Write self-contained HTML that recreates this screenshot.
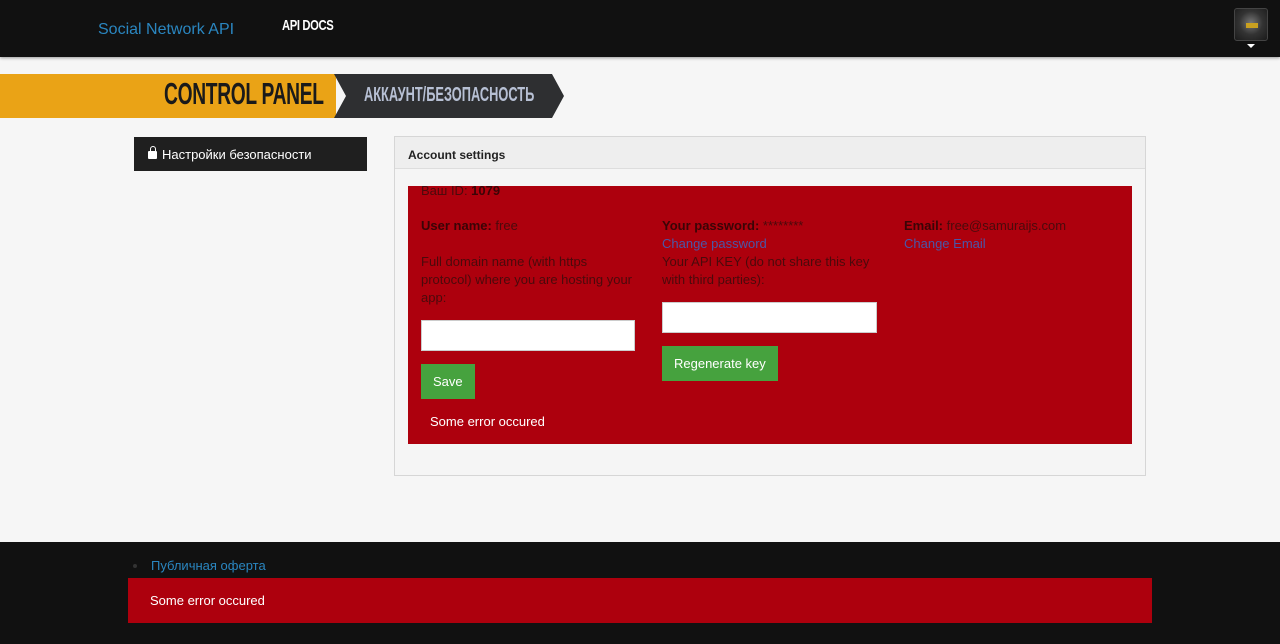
<!DOCTYPE html>
<html><head><meta charset="utf-8"><style>
*{margin:0;padding:0;box-sizing:border-box}
body{width:1280px;height:644px;background:#f6f6f6;font-family:"Liberation Sans",sans-serif;font-size:13px;position:relative;overflow:hidden}
.abs{position:absolute}
.nav{left:0;top:0;width:1280px;height:57px;background:#111;box-shadow:0 1px 3px #999}
.brand{left:98px;top:21px;color:#2a86c0;font-size:16px}
.docs{left:282px;top:17px;color:#fff;font-size:15px;font-weight:bold;transform:scaleX(.75);transform-origin:left;letter-spacing:-.5px}
.av{left:1234px;top:8px;width:34px;height:33px;border-radius:3px;background:radial-gradient(circle at 50% 45%,#777,#333 50%,#1a1a1a);border:1px solid #444}
.av:after{content:"";position:absolute;left:11px;top:14px;width:12px;height:5px;background:#c9a020}
.tri{left:1247px;top:44px;width:0;height:0;border-left:4px solid transparent;border-right:4px solid transparent;border-top:4px solid #fff}
.yel{left:0;top:74px;width:336px;height:44px;background:#eaa316}
.cp{left:164px;top:76px;font-size:31px;font-weight:bold;color:#1a1a1a;transform:scaleX(.62);transform-origin:left;letter-spacing:-.5px}
.dark{left:334px;top:74px;width:230px;height:44px;background:#2e2f31;clip-path:polygon(0 0,218px 0,230px 22px,218px 44px,0 44px,12px 22px)}
.acc{left:364px;top:84px;font-size:20px;font-weight:bold;color:#b7c0d4;transform:scaleX(.64);transform-origin:left}
.side{left:134px;top:137px;width:233px;height:34px;background:#1f1f1f;color:#fff;padding:10px 0 0 28px}
.lock{left:148px;top:151px;width:9px;height:8px;background:#fff;border-radius:1px}
.lock:before{content:"";position:absolute;left:1.5px;top:-5px;width:6px;height:7px;border:1.5px solid #fff;border-radius:3px 3px 0 0;box-sizing:border-box}
.panel{left:394px;top:136px;width:752px;height:340px;background:#f5f5f5;border:1px solid #d6d6d6}
.ph{height:32px;border-bottom:1px solid #ddd;background:#eee;padding:11px 13px;font-weight:bold;font-size:12px;color:#222}
.red{left:408px;top:186px;width:724px;height:258px;background:#ad000d;color:#4a0a0c}
.red .t{position:absolute;font-size:13px;line-height:18px}
.red b{color:#3a0406}
.lnk{color:#4a57a8}
.inp{position:absolute;background:#fff;border:1px solid #ccc;height:31px}
.btn{position:absolute;background:#46a23e;color:#fff;font-size:13px;padding:10px 12px}
.foot{left:0;top:542px;width:1280px;height:102px;background:#111}
.pub{left:151px;top:558px;color:#2a86c0;font-size:13px}
.dot{left:133px;top:564px;width:4px;height:4px;background:#333;border-radius:2px}
.err{left:128px;top:578px;width:1024px;height:45px;background:#ad000d;color:#fff;padding:15px 22px;font-size:13px}
</style></head><body>
<div class="abs nav"></div>
<div class="abs brand">Social Network API</div>
<div class="abs docs">API DOCS</div>
<div class="abs av"></div><div class="abs tri"></div>
<div class="abs yel"></div>
<div class="abs cp">CONTROL PANEL</div>
<div class="abs dark"></div>
<div class="abs acc">АККАУНТ/БЕЗОПАСНОСТЬ</div>
<div class="abs side">Настройки безопасности</div>
<div class="abs lock"></div>
<div class="abs panel"><div class="ph">Account settings</div></div>
<div class="abs red">
<div class="t" style="left:13px;top:-4px">Ваш ID: <b>1079</b></div>
<div class="t" style="left:13px;top:31px"><b>User name:</b> free</div>
<div class="t" style="left:13px;top:67px;width:220px">Full domain name (with https protocol) where you are hosting your app:</div>
<div class="inp" style="left:13px;top:134px;width:214px"></div>
<div class="btn" style="left:13px;top:178px">Save</div>
<div class="t" style="left:22px;top:227px;color:#fff">Some error occured</div>
<div class="t" style="left:254px;top:31px;width:220px"><b>Your password:</b> ********<br><span class="lnk">Change password</span><br>Your API KEY (do not share this key with third parties):</div>
<div class="inp" style="left:254px;top:116px;width:215px"></div>
<div class="btn" style="left:254px;top:160px">Regenerate key</div>
<div class="t" style="left:496px;top:31px"><b>Email:</b> free@samuraijs.com<br><span class="lnk">Change Email</span></div>
</div>
<div class="abs foot"></div>
<div class="abs dot"></div>
<div class="abs pub">Публичная оферта</div>
<div class="abs err">Some error occured</div>
</body></html>
